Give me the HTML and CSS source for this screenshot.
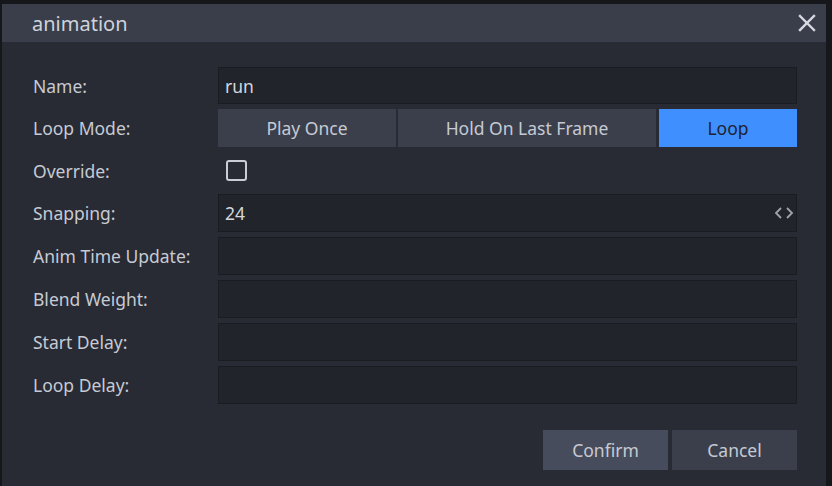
FILE: index.html
```html
<!DOCTYPE html>
<html>
<head>
    <title>animation</title>
    <link rel="stylesheet" href="styles.css">
</head>
<body>
    <div class="dialog">
        <div class="titlebar">
            <span class="title">animation</span>
            <svg class="close" width="18" height="18" viewBox="0 0 18 18">
                <path d="M2 2 L16 16 M16 2 L2 16" stroke="#d6d9e0" stroke-width="2.4" stroke-linecap="square"/>
            </svg>
        </div>
        <div class="content">
            <div class="form">
                <label>Name:</label>
                <div class="field">run</div>

                <label>Loop Mode:</label>
                <div class="modes">
                    <button class="mode once">Play Once</button>
                    <button class="mode hold">Hold On Last Frame</button>
                    <button class="mode loop active">Loop</button>
                </div>

                <label>Override:</label>
                <div class="check-row"><span class="checkbox"></span></div>

                <label>Snapping:</label>
                <div class="field spin">
                    <span>24</span>
                    <svg width="20" height="14" viewBox="0 0 20 14">
                        <path d="M7 2 L2 7 L7 12 M13 2 L18 7 L13 12" fill="none" stroke="#9ea3ad" stroke-width="1.8"/>
                    </svg>
                </div>

                <label>Anim Time Update:</label>
                <div class="field"></div>

                <label>Blend Weight:</label>
                <div class="field"></div>

                <label>Start Delay:</label>
                <div class="field"></div>

                <label>Loop Delay:</label>
                <div class="field"></div>
            </div>
            <div class="footer">
                <button class="btn confirm">Confirm</button>
                <button class="btn cancel">Cancel</button>
            </div>
        </div>
    </div>
</body>
</html>
```

FILE: styles.css
```css
body {
    margin: 0;
    padding: 0;
    background-color: #16171b;
    font-family: "Noto Sans", sans-serif;
    font-size: 17.5px;
    color: #c6cad3;
    overflow: hidden;
    height: 486px;
}
.dialog {
    margin: 4px 0 0 2px;
    width: 824px;
    height: 482px;
    background: #282b34;
}
.titlebar {
    height: 38px;
    background: #3a3e4b;
    display: flex;
    align-items: center;
    justify-content: space-between;
    padding: 0 10px 0 30px;
}
.title {
    font-size: 20px;
    color: #cfd3dc;
}
.content {
    padding: 25px 29px 0 31px;
}
.form {
    display: grid;
    grid-template-columns: 185px 1fr;
    grid-template-rows: 37px 38px 37px 38px 38px 38px 38px 38px;
    row-gap: 5px;
}
label {
    display: flex;
    align-items: center;
}
.field {
    box-sizing: border-box;
    background: #21242b;
    border: 1px solid #1a1c21;
    display: flex;
    align-items: center;
    padding: 0 6px;
    color: #d4d7de;
}
.spin {
    justify-content: space-between;
    padding-right: 2px;
}
.modes {
    display: flex;
}
button {
    font-family: "Noto Sans", sans-serif;
    font-size: 17.5px;
    border: none;
    padding: 0;
    color: #c6cad3;
    background: #3b3f4c;
}
.mode.once {
    width: 178px;
    margin-right: 2px;
}
.mode.hold {
    width: 258px;
    margin-right: 3px;
}
.mode.loop {
    width: 138px;
}
.mode.active {
    background: #3f8ffe;
    color: #1d2330;
}
.check-row {
    display: flex;
    align-items: center;
    padding-left: 8px;
}
.checkbox {
    box-sizing: border-box;
    width: 21px;
    height: 21px;
    border: 2px solid #c9cdd5;
    border-radius: 3px;
}
.footer {
    display: flex;
    justify-content: flex-end;
    gap: 4px;
    margin-top: 26px;
}
.btn {
    width: 125px;
    height: 40px;
}
.btn.confirm {
    background: #474c5c;
}
.btn.cancel {
    background: #3b3f4c;
}
```
